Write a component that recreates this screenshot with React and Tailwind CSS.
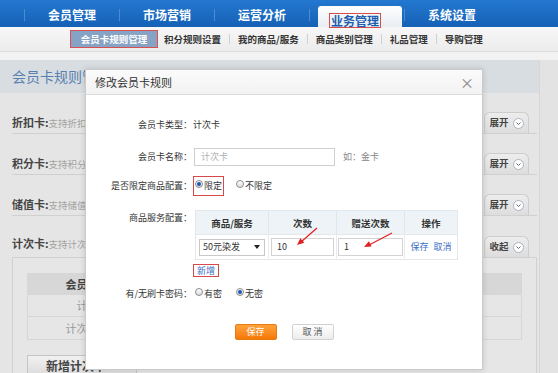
import React from 'react';

const navItems = ['会员管理', '市场营销', '运营分析', '业务管理', '系统设置'];
const subItems = ['积分规则设置', '我的商品/服务', '商品类别管理', '礼品管理', '导购管理'];

const cardRows = [
  { name: '折扣卡', desc: '支持折扣', tab: '展开' },
  { name: '积分卡', desc: '支持积分', tab: '展开' },
  { name: '储值卡', desc: '支持储值', tab: '展开' },
];

function Chevron() {
  return (
    <span className="w-[11px] h-[11px] rounded-full border border-[#a9b4bf] bg-white flex items-center justify-center">
      <svg width="7" height="7" viewBox="0 0 7 7">
        <path d="M1.5 2.5 L3.5 4.5 L5.5 2.5" fill="none" stroke="#667" strokeWidth="1" />
      </svg>
    </span>
  );
}

function Tab({ label }) {
  return (
    <div className="mr-[8px] h-[21px] w-[45px] rounded-t-[6px] border border-b-0 border-[#cdcdcd] bg-gradient-to-b from-[#ededed] to-[#dddddd] flex items-center justify-center gap-[4px]">
      <span className="text-[9.5px] font-bold text-[#444] leading-none">{label}</span>
      <Chevron />
    </div>
  );
}

function Radio({ checked }) {
  return (
    <span className="mb-[4px] mr-[1px] w-[8px] h-[8px] shrink-0 rounded-full border border-[#8d8d8d] bg-gradient-to-b from-white to-[#dcdcdc] flex items-center justify-center">
      {checked && <span className="w-[4px] h-[4px] rounded-full bg-[#1c57b8]" />}
    </span>
  );
}

export default function App() {
  return (
    <div className="relative w-[558px] h-[373px] overflow-hidden bg-[#e5e5e5] font-['Noto_Sans_CJK_SC',sans-serif]">
      {/* top nav */}
      <div className="h-[27px] flex bg-gradient-to-b from-[#2478cf] to-[#1461b6]">
        <div className="w-[24px]" />
        {navItems.map((item, i) => (
          <div key={item} className="flex">
            <div className="w-px h-[12px] mt-[9px] bg-[#4a8bd3]" />
            {i === 3 ? (
              <div className="w-[94px] flex items-end">
                <div className="ml-[8px] w-[84px] h-[21px] rounded-t-[3px] bg-gradient-to-b from-white to-[#e8edf2] pl-[11px] pt-[1px]">
                  <span className="inline-block border border-[#d84c4c] px-[1px] h-[15px] leading-[13px] text-[12px] font-bold text-[#1b5db0]">
                    {item}
                  </span>
                </div>
              </div>
            ) : (
              <div className="w-[94px] flex items-center justify-center text-[12px] font-bold text-white pt-[3px]">
                {item}
              </div>
            )}
          </div>
        ))}
      </div>

      {/* sub nav */}
      <div className="h-[25px] flex items-center pl-[70px] bg-gradient-to-b from-[#f7f7f7] to-[#ececec] border-b border-[#dcdcdc]">
        <div className="w-[88px] h-[18px] border border-[#d85050] bg-[#86a2c4] flex items-center justify-center text-[9.5px] font-bold text-white">
          会员卡规则管理
        </div>
        <div className="flex items-center ml-[6px] text-[9.5px] font-semibold text-[#333]">
          {subItems.map((s, i) => (
            <div key={s} className="flex items-center">
              {i > 0 && <span className="mx-[8px] w-px h-[10px] bg-[#cfcfcf]" />}
              <span>{s}</span>
            </div>
          ))}
        </div>
      </div>
      <div className="h-[8px] bg-[#f2f2f2]" />

      {/* dimmed page under the dialog */}
      <div className="flex">
        <div className="w-[540px] border-r border-[#d6d6d6]">
          <div className="h-[33px] flex items-center pl-[12px] bg-[#d8dde1] text-[14px] text-[#5a80b0]">
            会员卡规则管理
          </div>
          <div className="pl-[12px] pr-[2px]">
            {cardRows.map((r) => (
              <div key={r.name} className="h-[41px] flex items-end justify-between border-b border-[#d0d0d0]">
                <div className="pb-[3px] flex items-baseline leading-[14px]">
                  <span className="text-[11px] font-bold text-[#444]">{r.name}:</span>
                  <span className="text-[9.5px] text-[#a3a3a3]">{r.desc}</span>
                </div>
                <Tab label={r.tab} />
              </div>
            ))}
            <div className="h-[41px] flex items-end justify-between">
              <div className="pb-[6px] flex items-baseline leading-[14px]">
                <span className="text-[11px] font-bold text-[#444]">计次卡:</span>
                <span className="text-[9.5px] text-[#a3a3a3]">支持计次</span>
              </div>
              <Tab label="收起" />
            </div>
            <div className="h-[120px] border border-[#d0d0d0] bg-[#e6e6e6] pt-[15px] px-[14px]">
              <div className="border border-[#d6d6d6] text-[11px] text-[#999]">
                <div className="h-[21px] grid grid-cols-[130px_1fr] items-center bg-[#d7d7d7] font-bold text-[#444] text-center">
                  <span>会员卡名称</span>
                  <span />
                </div>
                <div className="h-[22px] grid grid-cols-[130px_1fr] items-center border-b border-[#d6d6d6] text-center">
                  <span>计次卡</span>
                  <span />
                </div>
                <div className="h-[22px] grid grid-cols-[130px_1fr] items-center text-center">
                  <span>计次洗发卡</span>
                  <span />
                </div>
              </div>
              <div className="mt-[15px] w-[110px] h-[22px] border border-[#c4c4c4] bg-gradient-to-b from-[#f1f1f1] to-[#dadada] pl-[18px] flex items-center text-[12px] font-bold text-[#444]">
                新增计次卡
              </div>
            </div>
          </div>
        </div>
        <div className="flex-1 bg-[#e3e3e3]" />
      </div>

      {/* dialog */}
      <div className="absolute left-[85px] top-[69px] w-[398px] h-[301px] bg-white border border-[#cacaca] shadow-[0_0_6px_rgba(0,0,0,0.15)]">
        <div className="h-[25px] flex items-center justify-between pl-[9px] pr-[8px] border-b border-[#dcdcdc] bg-gradient-to-b from-[#fbfbfb] to-[#f2f2f2]">
          <span className="text-[11px] text-[#333]">修改会员卡规则</span>
          <span className="text-[14px] leading-none text-[#888]">×</span>
        </div>

        <div className="text-[9px] leading-[12px] text-[#333]">
          <div className="mt-[21px] h-[18px] flex items-center">
            <span className="w-[106px] text-right">会员卡类型：</span>
            <span className="ml-[1px]">计次卡</span>
          </div>

          <div className="mt-[14px] h-[18px] flex items-center">
            <span className="w-[106px] text-right">会员卡名称：</span>
            <div className="ml-[2px] w-[141px] h-[18px] border border-[#cfcfcf] flex items-center pl-[6px] text-[#b0b0b0]">
              计次卡
            </div>
            <span className="ml-[8px] text-[#888]">如：金卡</span>
          </div>

          <div className="mt-[10px] h-[20px] flex items-center">
            <span className="w-[106px] text-right">是否限定商品配置：</span>
            <div className="ml-[1px] w-[31px] h-[20px] border border-[#d84848] flex items-center pl-[1px]">
              <Radio checked />
              <span>限定</span>
            </div>
            <div className="ml-[12px] flex items-center">
              <Radio />
              <span>不限定</span>
            </div>
          </div>

          <div className="mt-[14px] flex items-start">
            <span className="w-[106px] text-right pt-[2px]">商品服务配置：</span>
            <div className="ml-[3px] w-[263px] border border-[#e3e8ec]">
              <div className="h-[23px] grid grid-cols-[73px_68px_68px_1fr] bg-[#eef3f7] text-[9.5px] font-bold text-center">
                <span className="flex items-center justify-center border-r border-[#e1e6ea]">商品/服务</span>
                <span className="flex items-center justify-center border-r border-[#e1e6ea]">次数</span>
                <span className="flex items-center justify-center border-r border-[#e1e6ea]">赠送次数</span>
                <span className="flex items-center justify-center">操作</span>
              </div>
              <div className="h-[25px] grid grid-cols-[73px_68px_68px_1fr] border-t border-[#e3e8ec]">
                <div className="flex items-center px-[3px] border-r border-[#e8ecef]">
                  <div className="w-full h-[17px] border border-[#c9c9c9] flex items-center justify-between pl-[3px] pr-[4px]">
                    <span>50元染发</span>
                    <svg width="6" height="4" viewBox="0 0 6 4">
                      <polygon points="0,0 6,0 3,4" fill="#222" />
                    </svg>
                  </div>
                </div>
                <div className="flex items-center px-[2px] border-r border-[#e8ecef]">
                  <div className="w-full h-[18px] border border-[#d3d3d3] flex items-center pl-[5px]">10</div>
                </div>
                <div className="flex items-center px-[1px] border-r border-[#e8ecef]">
                  <div className="w-full h-[18px] border border-[#d3d3d3] flex items-center pl-[5px]">1</div>
                </div>
                <div className="flex items-center justify-center gap-[5px] text-[#3b6ec2]">
                  <span>保存</span>
                  <span>取消</span>
                </div>
              </div>
            </div>
          </div>

          <div className="mt-[4px] flex">
            <span className="ml-[107px] h-[13px] border border-[#d84848] px-[3px] flex items-center text-[#3b6ec2]">新增</span>
          </div>

          <div className="mt-[10px] h-[14px] flex items-center">
            <span className="w-[106px] text-right">有/无刷卡密码：</span>
            <div className="ml-[3px] flex items-center">
              <Radio />
              <span>有密</span>
            </div>
            <div className="ml-[14px] flex items-center">
              <Radio checked />
              <span>无密</span>
            </div>
          </div>

          <div className="mt-[23px] flex justify-center gap-[15px]">
            <div className="w-[42px] h-[16px] rounded-[2px] border border-[#e77a10] bg-gradient-to-b from-[#ffa238] to-[#f57800] flex items-center justify-center text-white">
              保存
            </div>
            <div className="w-[42px] h-[16px] rounded-[2px] border border-[#d2d2d2] bg-gradient-to-b from-white to-[#ededed] flex items-center justify-center text-[#555]">
              取 消
            </div>
          </div>
        </div>

        <svg className="absolute inset-0 pointer-events-none" width="396" height="299">
          <line x1="231" y1="158" x2="215" y2="172" stroke="#e02020" strokeWidth="1.2" />
          <polygon points="211,175 218.3,172.8 214.4,168.2" fill="#e02020" />
          <line x1="306" y1="163" x2="283" y2="175" stroke="#e02020" strokeWidth="1.2" />
          <polygon points="278,177 285.6,176.6 282.9,171.2" fill="#e02020" />
        </svg>
      </div>
    </div>
  );
}
